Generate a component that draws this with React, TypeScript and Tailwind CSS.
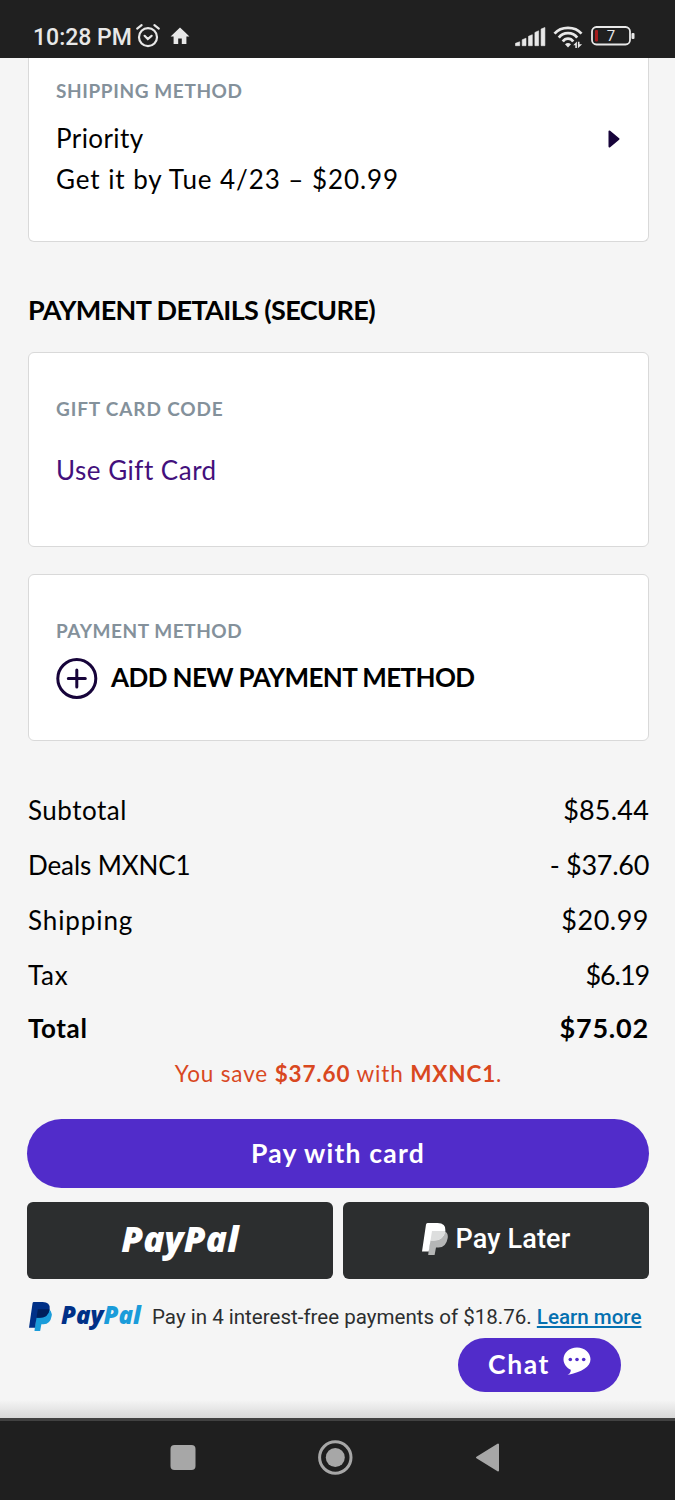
const totals = [
  { label: "Subtotal", value: "$85.44", l: "tracking-[0.5px]", v: "tracking-[0.2px]" },
  { label: "Deals MXNC1", value: "- $37.60", l: "tracking-[-0.1px]", v: "tracking-[-0.3px]" },
  { label: "Shipping", value: "$20.99", l: "tracking-[0.9px]", v: "tracking-[0.5px]" },
  { label: "Tax", value: "$6.19", l: "tracking-[0.7px]", v: "tracking-[-1.1px]" },
];

function StatusBar() {
  return (
    <header className="flex h-[58px] shrink-0 items-center bg-[#202020] pt-[15px] pl-[33px] pr-[40px] text-[#e8e8e8]">
      <span className="mt-[2px] font-['Roboto',sans-serif] text-[23px] leading-[28px] font-medium">10:28 PM</span>
      <svg className="ml-[3px] -mt-[2px]" width="26" height="26" viewBox="0 0 26 26" fill="none" stroke="#e8e8e8" strokeWidth="2.2" strokeLinecap="round">
        <circle cx="13" cy="14.2" r="9" />
        <path d="M2.2 5.6 6.6 2.2M23.8 5.6 19.4 2.2" />
        <path d="m9.6 12.8 3.2 3.2 3.8-3.2" />
      </svg>
      <svg className="-mt-[2px] ml-[9px]" width="20" height="18" viewBox="0 0 20 18" fill="#e8e8e8">
        <path d="M10 .4.6 9.4h3V17h4.600v-5.400h3.600V17h4.600V9.400h3L15.600 5.700Z" />
      </svg>
      <div className="grow" />
      <svg width="31" height="20" viewBox="0 0 31 20" fill="#e8e8e8" stroke="#e8e8e8" strokeWidth="0.6" strokeLinejoin="round">
        <path d="M.5 16.300 4.700 14.800V18.700H.5zM7.200 12.800 11 11.200V18.700H7.200zM13.500 9.300 17.300 7.700V18.700H13.500zM19.900 5.500 23.600 3.800V18.700H19.900zM26.100 2 29.900 .5V18.700H26.100z" />
      </svg>
      <svg className="ml-[7px]" width="30" height="24" viewBox="0 0 30 24" fill="none" stroke="#e8e8e8" strokeWidth="2.700">
        <path d="M1.500 8.700C8 .8 22 .8 28.500 8.700" />
        <path d="M5.800 12.600C10.200 6.700 19.800 6.700 24.200 12.600" />
        <path d="M9.800 16.500C12.400 12.700 17.600 12.700 20.200 16.500" />
        <path d="M12 19.200q3-2.600 6 0L15 22.500z" fill="#e8e8e8" stroke="none" />
        <path d="M20.300 20.300 23.900 16.600V22.900H22.300V20.300zM24.900 16.800H26.500V19.300H29.100L24.900 23.300z" fill="#e8e8e8" stroke="none" />
      </svg>
      <svg className="-mt-[2px] ml-[8px]" width="44" height="20" viewBox="0 0 44 20">
        <rect x="1" y="1" width="38" height="17.500" rx="4.500" fill="none" stroke="#e8e8e8" strokeWidth="1.800" />
        <rect x="4" y="4" width="3" height="11.500" rx="1" fill="#a51d1d" />
        <rect x="40.500" y="7" width="3" height="6" rx="1" fill="#e8e8e8" />
        <text x="20" y="15" textAnchor="middle" fill="#e8e8e8" fontFamily="Roboto, sans-serif" fontSize="15">7</text>
      </svg>
    </header>
  );
}

function PayPalMark({ width, height, back, front, overlap }: { width: number; height: number; back: string; front: string; overlap: string }) {
  return (
    <svg width={width} height={height} viewBox="0 0 26 32" preserveAspectRatio="none">
      <path d="M9 8H22.500Q26.700 10.500 25.600 15.500Q24 24.500 16.500 24.500H14L12.600 32H6.200Z" fill={front} />
      <path d="M5.500 0H15.500Q24 0 23.400 7.500Q21.700 17.500 12 17.500H8.500L6.700 28.500H0L4 1.500Q4.200 0 5.500 0Z" fill={back} />
      <path d="M10 8H23.300Q21.700 17.500 12 17.500H8.500Z" fill={overlap} />
    </svg>
  );
}

export default function App() {
  return (
    <div className="flex h-[1500px] w-[675px] flex-col overflow-hidden bg-[#f5f5f5] font-['Lato',sans-serif] text-black">
      <StatusBar />
      <main className="flex h-[1360px] flex-col pr-[26px] pl-[28px]">
        <section className="flex h-[184px] shrink-0 justify-between rounded-b-[6px] border border-t-0 border-[#d9d9d9] bg-white pt-[21px] pr-[28px] pl-[27px]">
          <div>
            <h3 className="text-[19px] leading-[24px] font-bold tracking-[0.6px] text-[#84919b]">SHIPPING METHOD</h3>
            <p className="mt-[15px] text-[26px] leading-[41px] tracking-[0.4px]">Priority</p>
            <p className="text-[26px] leading-[41px] tracking-[0.93px]">Get it by Tue 4/23 – $20.99</p>
          </div>
          <svg className="mt-[51px]" width="12" height="18" viewBox="0 0 12 18">
            <path d="M1.500 1.500V16.500L10.500 9Z" fill="#17043a" stroke="#17043a" strokeWidth="2" strokeLinejoin="round" />
          </svg>
        </section>

        <h2 className="mt-[52px] text-[27px] leading-[32px] font-bold tracking-[-0.6px]">PAYMENT DETAILS (SECURE)</h2>

        <section className="mt-[26px] h-[195px] shrink-0 rounded-[6px] border border-[#d9d9d9] bg-white px-[27px] pt-[44px]">
          <h3 className="text-[19px] leading-[24px] font-bold tracking-[0.85px] text-[#84919b]">GIFT CARD CODE</h3>
          <a className="mt-[33px] block text-[26px] leading-[32px] tracking-[0.5px] text-[#43107c]">Use Gift Card</a>
        </section>

        <section className="mt-[27px] h-[167px] shrink-0 rounded-[6px] border border-[#d9d9d9] bg-white px-[27px] pt-[44px]">
          <h3 className="text-[19px] leading-[24px] font-bold tracking-[0.55px] text-[#84919b]">PAYMENT METHOD</h3>
          <div className="mt-[14px] flex items-center">
            <svg width="42" height="42" viewBox="0 0 42 42" fill="none" stroke="#17043a" strokeWidth="3" strokeLinecap="round">
              <circle cx="20.800" cy="21.500" r="19" />
              <path d="M12.300 21.500H29.300M20.800 13V30" />
            </svg>
            <span className="-mt-[2px] ml-[13px] text-[26px] leading-[32px] font-bold tracking-[-0.6px]">ADD NEW PAYMENT METHOD</span>
          </div>
        </section>

        <div className="mt-[42px] flex flex-col text-[26px]">
          {totals.map((t) => (
            <div key={t.label} className="flex h-[55px] items-center justify-between">
              <span className={t.l}>{t.label}</span>
              <span className={`text-[27px] ${t.v}`}>{t.value}</span>
            </div>
          ))}
          <div className="-mt-[1px] flex h-[53px] items-center justify-between font-bold">
            <span className="tracking-[0.6px]">Total</span>
            <span className="text-[27px] tracking-[0.8px]">$75.02</span>
          </div>
        </div>
        <p className="mt-[1px] text-center text-[22.500px] leading-[36px] tracking-[0.85px] text-[#d9481f]">
          You save <b>$37.60</b> with <b>MXNC1</b>.
        </p>

        <button className="-ml-[1px] mt-[27px] flex h-[69px] shrink-0 items-center justify-center rounded-full bg-[#512cca] text-[26.500px] font-bold tracking-[1.200px] text-white">
          Pay with card
        </button>
        <div className="-ml-[1px] mt-[14px] grid h-[77px] shrink-0 grid-cols-2 gap-[10px]">
          <button className="flex items-center justify-center rounded-[6px] bg-[#2c2e2f] pb-[3px] font-['Open_Sans',sans-serif] text-[35px] font-extrabold tracking-[0.2px] text-white italic">
            PayPal
          </button>
          <button className="flex items-center justify-center rounded-[6px] bg-[#2c2e2f] pb-[4px] font-['Roboto',sans-serif] text-[27px] font-medium text-white">
            <PayPalMark width={26} height={32} back="#ffffff" front="#b5b6b6" overlap="#dddede" />
            <span className="mt-[2px] ml-[8px] tracking-[0.15px]">Pay Later</span>
          </button>
        </div>

        <div className="mt-[22px] flex h-[30px] shrink-0 items-center pl-[1px] whitespace-nowrap">
          <PayPalMark width={23} height={29} back="#003087" front="#1a9cda" overlap="#001f5c" />
          <span className="-mt-[2px] ml-[9px] w-[81px] font-['Open_Sans',sans-serif] text-[24px] leading-[28px] font-extrabold text-[#003087] italic">
            Pay<span className="text-[#1a9cda]">Pal</span>
          </span>
          <span className="mt-[2px] ml-[10px] font-['Roboto',sans-serif] text-[20.550px] text-[#2c2e2f]">
            Pay in 4 interest-free payments of $18.76.{" "}
            <a className="font-medium text-[#0570b0] underline decoration-2 underline-offset-[2px]">Learn more</a>
          </span>
        </div>

        <button className="mt-[7px] mr-[28px] flex h-[54px] w-[163px] shrink-0 items-center self-end rounded-full bg-[#512cca] pl-[30px] text-[26.500px] font-bold tracking-[1.600px] text-white">
          <span className="w-[62px]">Chat</span>
          <svg className="-mt-[8px] ml-[13px]" width="28" height="29" viewBox="0 0 28 29">
            <path d="M14 .5C21.700 .5 27.500 5.700 27.500 12.300C27.500 20 19 25 4.500 28Q8 26 7.800 22.800C3.500 20.800 .5 17 .5 12.300C.5 5.700 6.300 .5 14 .5Z" fill="#fff" />
            <circle cx="7.300" cy="12.500" r="1.800" fill="#512cca" />
            <circle cx="14" cy="12.500" r="1.800" fill="#512cca" />
            <circle cx="20.700" cy="12.500" r="1.800" fill="#512cca" />
          </svg>
        </button>
      </main>
      <div className="-mt-[18px] h-[18px] w-full shrink-0 bg-linear-to-b from-[#f5f5f5] to-[#d8d8d8]" />
      <nav className="flex h-[82px] shrink-0 items-center border-t-[3px] border-[#414141] bg-[#1f1f1f] pl-[170px]">
        <svg className="-mt-[6px]" width="332" height="36" viewBox="0 0 332 36" fill="#a7a7a7">
          <rect x="0.500" y="5" width="25" height="25" rx="4" />
          <circle cx="165.300" cy="17.500" r="15.700" fill="none" stroke="#a7a7a7" strokeWidth="3" />
          <circle cx="165.300" cy="17.500" r="9.500" />
          <path d="M307 17.500 328 4.500V30.500Z" stroke="#a7a7a7" strokeWidth="2" strokeLinejoin="round" />
        </svg>
      </nav>
    </div>
  );
}
